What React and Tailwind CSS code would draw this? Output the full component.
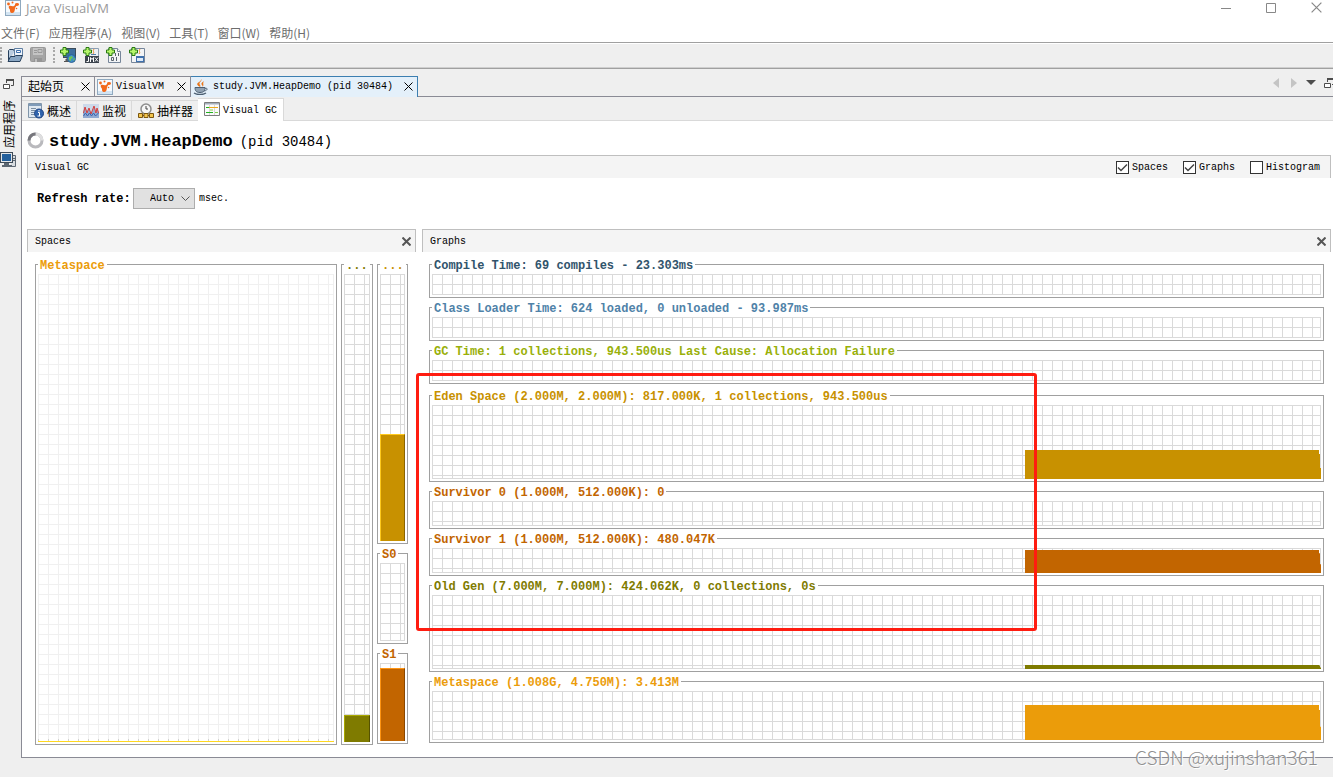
import React, { useState } from "react";

const menus = ["文件(F)", "应用程序(A)", "视图(V)", "工具(T)", "窗口(W)", "帮助(H)"];

const graphs = [
  {
    title: "Compile Time: 69 compiles - 23.303ms",
    text: "text-[#31546c]",
    height: "h-[21px]",
  },
  {
    title: "Class Loader Time: 624 loaded, 0 unloaded - 93.987ms",
    text: "text-[#4f82a8]",
    height: "h-[21px]",
  },
  {
    title: "GC Time: 1 collections, 943.500us Last Cause: Allocation Failure",
    text: "text-[#99b00a]",
    height: "h-[21px]",
    last: true,
  },
  {
    title: "Eden Space (2.000M, 2.000M): 817.000K, 1 collections, 943.500us",
    text: "text-[#c89100]",
    fill: "bg-[#c89100]",
    height: "h-[74px]",
    level: 29,
  },
  {
    title: "Survivor 0 (1.000M, 512.000K): 0",
    text: "text-[#c26500]",
    height: "h-[25px]",
  },
  {
    title: "Survivor 1 (1.000M, 512.000K): 480.047K",
    text: "text-[#c26500]",
    fill: "bg-[#c26500]",
    height: "h-[25px]",
    level: 23,
  },
  {
    title: "Old Gen (7.000M, 7.000M): 424.062K, 0 collections, 0s",
    text: "text-[#7f7b00]",
    fill: "bg-[#7f7b00]",
    height: "h-[74px]",
    level: 4,
  },
  {
    title: "Metaspace (1.008G, 4.750M): 3.413M",
    text: "text-[#eb9c0a]",
    fill: "bg-[#eb9c0a]",
    height: "h-[49px]",
    level: 35,
  },
];

/* ---------- Icons ---------- */

const VisualVmIcon = () => (
  <svg className="w-4 h-4 shrink-0" viewBox="0 0 16 16">
    <rect x="0.5" y="0.5" width="15" height="15" fill="#f6fafd" stroke="#8fa9bf" />
    <path d="M1 12h14v3H1z" fill="#d3e4f2" />
    <path d="M4 6c2-1 3 1 5 0l2-2 1 1-2 3c0 3-1 5-3 5s-2-2-2-3-2-2-1-4z" fill="#f2691b" />
    <circle cx="3.5" cy="4" r="1.4" fill="#f2691b" />
    <ellipse cx="12" cy="4.5" rx="2" ry="1.4" fill="#f2691b" />
    <circle cx="7.5" cy="2.5" r="1" fill="#f2691b" />
    <circle cx="11.5" cy="8.5" r="0.8" fill="#f2691b" />
  </svg>
);

const OpenIcon = () => (
  <svg className="w-4 h-4" viewBox="0 0 16 16">
    <path d="M1.5 14V3.5l1-1h4l1 2" fill="#b9cce0" stroke="#27405c" />
    <path d="M7.5 1.5h8v7h-8z" fill="#eef4fb" stroke="#5f7fa3" />
    <path d="M9.500 3.500h4v2h-4z" fill="#fff" stroke="#3f71ae" />
    <path d="M1 14.5L3.500 9.500H8l1-1h6.500l-2.500 6z" fill="#8aa7c4" stroke="#27405c" />
  </svg>
);

const SaveIcon = () => (
  <svg className="w-4 h-4" viewBox="0 0 16 16">
    <rect x="0.5" y="0.5" width="15" height="14" rx="1" fill="#a5a5a5" stroke="#989898" />
    <path d="M3 1h10v7H3z" fill="#c4c4c4" />
    <path d="M4 3.5h3M8 2.500h4v3H8zM4 5.5h3" fill="none" stroke="#999" />
    <path d="M4 11h8v4H4z" fill="#959595" />
    <path d="M5 12h2v3H5z" fill="#c0c0c0" />
  </svg>
);

const Plus = () => (
  <path
    d="M3 .5h3V3h2.500v3H6v2.500H3V6H.5V3H3z"
    fill="#b6f56b"
    stroke="#287a12"
  />
);

const AddHostIcon = () => (
  <svg className="w-4 h-4" viewBox="0 0 16 16">
    <rect x="3.500" y="1.500" width="12" height="9" fill="#3e6f9e" stroke="#3c4b59" />
    <path d="M4 14.500h5M6 12h3v2H6z" fill="#777" stroke="#555" />
    <circle cx="11.500" cy="11.500" r="4" fill="#3f8fc6" stroke="#2c5f93" />
    <path d="M9 10l3-1 1 2-2 1 0 2-2-1zM13 12l2-1-1 3z" fill="#6fc555" />
    <Plus />
  </svg>
);

const AddJmxIcon = () => (
  <svg className="w-4 h-4" viewBox="0 0 16 16">
    <path d="M3.500 1.500h12v14h-12z" fill="#eef2f6" stroke="#8c9eb2" />
    <path d="M11 2c-2 2 1 3-1 5" stroke="#ef8a2c" fill="none" />
    <path d="M8 7.500h5" stroke="#5480a8" />
    <path d="M2 9h14v7H2z" fill="#3c444e" />
    <path
      d="M5.500 10v4.500h-2M7.500 15v-4.500l1.500 2 1.500-2V15M12 10.500l3 4M15 10.500l-3 4"
      stroke="#fff"
      fill="none"
    />
    <Plus />
  </svg>
);

const AddDumpIcon = () => (
  <svg className="w-4 h-4" viewBox="0 0 16 16">
    <path d="M2.500 1.500h9l3 3v11h-12z" fill="#f2f4f6" stroke="#76869a" />
    <path d="M11.500 1.500v3h3" fill="#fff" stroke="#76869a" />
    <path
      d="M9.500 6v3M12.500 6v3M5.500 10.500h2v3h-2zM10.500 10v4"
      fill="none"
      stroke="#59636f"
    />
    <Plus />
  </svg>
);

const AddSnapshotIcon = () => (
  <svg className="w-4 h-4" viewBox="0 0 16 16">
    <path d="M2.500 1.500h13v14h-13z" fill="#f2f4f6" stroke="#76869a" />
    <path d="M11 2c-2 2 1 3-1 5" stroke="#ef8a2c" fill="none" />
    <rect x="7.500" y="9.500" width="7" height="5" fill="#dfeaf6" stroke="#3f71ae" />
    <path d="M8 10.500h6" stroke="#3f71ae" />
    <Plus />
  </svg>
);

const JavaIcon = () => (
  <svg className="w-4 h-4 shrink-0" viewBox="0 0 16 16">
    <path d="M8 0c2 2-3 3-1 6 1 1 0 2 0 2-3-2-4-3-1-5 2-1 2-2 2-3z" fill="#e9761a" />
    <path d="M11 2c-3 2-3 3-2 4 1 1 0 2 0 2 3-2 0-3 2-6z" fill="#e9761a" />
    <path d="M2 8.500h10c0 3-1 5-5 5s-5-2-5-5z" fill="#91a2b2" stroke="#4d6073" />
    <path d="M12 9.500c3-1 3 2-1 2.500" fill="none" stroke="#4d6073" />
    <path d="M1 14c3 2 9 2 12 0" fill="none" stroke="#4d6073" strokeWidth="1.500" />
  </svg>
);

const OverviewIcon = () => (
  <svg className="w-4 h-4 shrink-0" viewBox="0 0 16 16">
    <path d="M.5.5h13v14H.5z" fill="#dfe8f1" stroke="#8095aa" />
    <path d="M1 1h12v2H1z" fill="#7f9bb9" />
    <path d="M3 5.500h5M3 7.500h4M3 9.500h3M3 11.500h3" stroke="#7b8ea2" />
    <circle cx="11" cy="10.500" r="4.500" fill="#2f63ad" stroke="#1d4382" />
    <path d="M11 7v1.500M10 9.500h1.500v3.500M9.500 13h3" stroke="#fff" fill="none" />
  </svg>
);

const MonitorIcon = () => (
  <svg className="w-4 h-4 shrink-0" viewBox="0 0 16 16">
    <path d="M0 1h16v14H0z" fill="#cddaea" />
    <path d="M0 15V9l2-5 2 4 2-3 2 5 3-6 2 5 1-4 2 4v6z" fill="#8fa9d2" />
    <path
      d="M.5 10L2 4l2 6 2-5 2 6 3-8 2 7 1-5 1.500 5"
      fill="none"
      stroke="#d8403c"
    />
    <path d="M.5 13l2-3 2 3 2-3 2 3 2-3 2 3 3-3" fill="none" stroke="#3a62ad" />
  </svg>
);

const SamplerIcon = () => (
  <svg className="w-4 h-4 shrink-0" viewBox="0 0 16 16">
    <circle cx="8" cy="6" r="5" fill="#f6f6f6" stroke="#8d8d8d" strokeWidth="1.500" />
    <path d="M8 3v3h2" fill="none" stroke="#444" />
    <path d="M1 12.500h14" stroke="#7a5610" />
    <path
      d="M.5 10.500h4v4h-4zM6 10.500h4v4H6zM11.500 10.500h4v4h-4z"
      fill="#f4c64e"
      stroke="#7a5610"
    />
  </svg>
);

const VisualGcIcon = () => (
  <svg className="w-4 h-4 shrink-0" viewBox="0 0 16 16">
    <path d="M.5 1.500h15v13H.5z" fill="#fbfbfb" stroke="#7d7d7d" />
    <path d="M1 2h14v1.500H1z" fill="#a4aebb" />
    <path d="M5.500 4v10M10.500 4v10" stroke="#d8d8d8" />
    <path d="M2 6.500h12" stroke="#eba91c" />
    <path d="M2 6.500h3M2 11.500h7" stroke="#1eb31e" />
    <path d="M11 11.500h3M6 9h3" stroke="#7fce4d" />
  </svg>
);

const ComputerIcon = () => (
  <svg className="w-4 h-4" viewBox="0 0 16 16">
    <path d="M12.500 3.500h3v11h-5" fill="#d8dce0" stroke="#5c6772" />
    <path d="M12 6.500h3M12 8.500h3" stroke="#5c6772" />
    <rect x="0.500" y="0.500" width="12" height="10" fill="#e3e6e9" stroke="#3d4a57" />
    <rect x="2" y="2" width="9" height="7" fill="#225f9c" />
    <path d="M4 11h5v2H4zM2 13h10v2H2z" fill="#5c6772" />
  </svg>
);

const RestoreIcon = () => (
  <svg className="w-[11px] h-[11px]" viewBox="0 0 11 11" fill="none" stroke="#4d4d4d">
    <path d="M3.500 4V1.500h7v5H8" />
    <path d="M3 1h8" strokeWidth="2" />
    <path d="M.5 5.500h6v4h-6z" fill="#fff" />
  </svg>
);

const Cross = ({ className }) => (
  <svg className={className} viewBox="0 0 9 9" fill="none" stroke="currentColor">
    <path d="M.5.5l8 8M8.500.5l-8 8" />
  </svg>
);

/* ---------- Building blocks ---------- */

const Grid = ({ height, light, children }) => (
  <div
    className={`relative w-full border-r border-b bg-[size:10px_10px] ${height} ${
      light
        ? "border-[#f0f0f0] bg-[linear-gradient(to_right,#f0f0f0_1px,transparent_1px),linear-gradient(to_bottom,#f0f0f0_1px,transparent_1px)]"
        : "border-[#dadada] bg-[linear-gradient(to_right,#dadada_1px,transparent_1px),linear-gradient(to_bottom,#dadada_1px,transparent_1px)]"
    }`}
  >
    {children}
  </div>
);

const Frame = ({ title, text, className = "", children }) => (
  <fieldset className={`min-w-0 border border-[#a0a0a0] p-[2px] ${className}`}>
    <legend
      className={`px-[2px] h-[15px] leading-[18px] text-xs font-bold whitespace-nowrap ${text}`}
    >
      {title}
    </legend>
    {children}
  </fieldset>
);

const Bar = ({ level, className }) => (
  <div
    className={`absolute left-0 -right-px -bottom-px border-t border-l border-r ${className}`}
    style={{ height: level }}
  />
);

const PanelHeader = ({ title, children }) => (
  <div className="flex items-center justify-between h-[23px] pl-[7px] border-t border-x border-[#bfbfbf] bg-[#f4f4f4]">
    <h2>{title}</h2>
    {children}
  </div>
);

const CheckBox = ({ label, initial }) => {
  const [checked, setChecked] = useState(initial);

  return (
    <label className="flex items-center gap-[3px]">
      <span className="relative w-[13px] h-[13px]">
        <input
          type="checkbox"
          checked={checked}
          onChange={(e) => setChecked(e.target.checked)}
          className="block appearance-none w-[13px] h-[13px] border border-[#333] bg-white"
        />
        {checked && (
          <svg
            className="absolute inset-0 pointer-events-none"
            viewBox="0 0 13 13"
            fill="none"
            stroke="#444"
            strokeWidth="1.500"
          >
            <path d="M2 6.500l3 3L11 3.500" />
          </svg>
        )}
      </span>
      {label}
    </label>
  );
};

const App = () => {
  const [rate, setRate] = useState("Auto");

  return (
    <div className="relative min-h-screen overflow-hidden bg-[#efefef] text-black text-[10px] font-['Liberation_Mono','Noto_Sans_CJK_SC',monospace]">
      {/* Title Bar */}
      <header className="bg-white border-b border-[#a0a0a0]">
        <div className="flex items-center justify-between h-[15px] pl-[5px] pr-[11px]">
          <div className="flex items-center gap-[5px] text-[13px] leading-4 text-[#999] font-['Open_Sans',sans-serif]">
            <VisualVmIcon />
            <h1>Java VisualVM</h1>
          </div>
          <div className="flex items-center gap-[35px] text-[#888]">
            <button aria-label="Minimize">
              <svg className="w-[10px] h-[10px]" viewBox="0 0 10 10" stroke="currentColor">
                <path d="M0 5.500h10" />
              </svg>
            </button>
            <button aria-label="Maximize">
              <svg className="w-[10px] h-[10px]" viewBox="0 0 10 10" fill="none" stroke="currentColor">
                <path d="M.5.5h9v9h-9z" />
              </svg>
            </button>
            <button aria-label="Close">
              <Cross className="w-[11px] h-[11px]" />
            </button>
          </div>
        </div>

        {/* Menu */}
        <nav className="flex items-center gap-[9px] h-[18px] mt-[9px] pl-px text-xs text-[#6d6d6d] font-['Noto_Sans_CJK_SC',sans-serif]">
          {menus.map((menu) => (
            <button key={menu} className="leading-[18px]">
              {menu}
            </button>
          ))}
        </nav>
      </header>

      {/* Toolbar */}
      <div className="border-t border-white">
        <div className="flex items-center h-6 pb-px border-b border-[#cfcfcf]">
          <span className="w-[2px] h-4 mr-[5px] border-l-2 border-dotted border-[#a8a8a8]" />
          <div className="flex gap-[7px]">
            <button aria-label="Open"><OpenIcon /></button>
            <button aria-label="Save"><SaveIcon /></button>
          </div>
          <span className="w-[2px] h-4 ml-[7px] mr-[5px] border-l-2 border-dotted border-[#a8a8a8]" />
          <div className="flex gap-[7px]">
            <button aria-label="Add host"><AddHostIcon /></button>
            <button aria-label="Add JMX connection"><AddJmxIcon /></button>
            <button aria-label="Add core dump"><AddDumpIcon /></button>
            <button aria-label="Add snapshot"><AddSnapshotIcon /></button>
          </div>
        </div>
        <div className="h-px bg-[#a0a0a0]" />
      </div>

      <div className="flex">
        {/* Side Bar */}
        <aside className="flex flex-col items-start w-[21px] shrink-0 pt-[10px]">
          <button aria-label="Restore" className="ml-[3px]"><RestoreIcon /></button>
          <button className="mt-[10px] ml-[3px] text-xs leading-4 [writing-mode:vertical-rl] [text-orientation:sideways] rotate-180">
            应用程序
          </button>
          <button aria-label="Applications" className="mt-1"><ComputerIcon /></button>
        </aside>

        <main className="relative flex-1 min-w-0 mt-[7px] border-l border-b border-[#8a8b95] bg-white">
          {/* Document Tabs */}
          <div className="flex justify-between h-[21px] border-b border-[#8a8b95] bg-[#efefef]">
            <div className="flex h-[21px]">
              <div className="flex items-center w-[73px] h-5 pl-[6px] pr-1 border-t border-r border-[#8a8b95] bg-[#f2f2f2]">
                <a href="#start" className="flex-1 pt-[2px] text-xs leading-4">起始页</a>
                <button aria-label="Close tab"><Cross className="w-[9px] h-[9px]" /></button>
              </div>
              <div className="flex items-center w-24 h-5 pl-[2px] pr-1 border-t border-r border-[#8a8b95] bg-[#f2f2f2]">
                <VisualVmIcon />
                <a href="#visualvm" className="flex-1 pl-[3px]">VisualVM</a>
                <button aria-label="Close tab"><Cross className="w-[9px] h-[9px]" /></button>
              </div>
              <div className="flex items-center w-[227px] h-[21px] pl-[2px] pr-1 pb-px border-t border-r border-[#3c7fb1] bg-[#e4f0fa]">
                <JavaIcon />
                <a href="#heapdemo" className="flex-1 pl-1">study.JVM.HeapDemo (pid 30484)</a>
                <button aria-label="Close tab"><Cross className="w-[9px] h-[9px]" /></button>
              </div>
            </div>
            <div className="flex items-center h-[14px]">
              <button aria-label="Previous" className="mr-3">
                <svg className="w-[6px] h-[10px]" viewBox="0 0 6 10" fill="#c4c4c4"><path d="M6 0v10L0 5z" /></svg>
              </button>
              <button aria-label="Next" className="mr-[9px]">
                <svg className="w-[6px] h-[10px]" viewBox="0 0 6 10" fill="#c4c4c4"><path d="M0 0v10l6-5z" /></svg>
              </button>
              <button aria-label="Tab list" className="mr-2">
                <svg className="w-[10px] h-[6px]" viewBox="0 0 10 6" fill="#4d4d4d"><path d="M0 0h10L5 5z" /></svg>
              </button>
              <button aria-label="Restore window" className="w-[9px] overflow-hidden"><RestoreIcon /></button>
            </div>
          </div>

          {/* Sub Tabs */}
          <div className="flex h-6 border-b border-[#d9d9d9] bg-[#efefef] text-xs">
            <a href="#overview" className="flex items-center gap-[3px] w-[55px] mt-[3px] pl-[6px] border-t border-r border-[#d9d9d9]">
              <OverviewIcon />
              <span className="pt-1">概述</span>
            </a>
            <a href="#monitor" className="flex items-center gap-[3px] w-[55px] mt-[3px] pl-[6px] border-t border-r border-[#d9d9d9]">
              <MonitorIcon />
              <span className="pt-1">监视</span>
            </a>
            <a href="#sampler" className="flex items-center gap-[3px] w-[66px] mt-[3px] pl-[6px] border-t border-[#d9d9d9]">
              <SamplerIcon />
              <span className="pt-1">抽样器</span>
            </a>
            <a href="#visualgc" className="flex items-center gap-[3px] w-[86px] h-[23px] mt-px pl-[6px] pb-[2px] border-t border-r border-[#d9d9d9] bg-white text-[10px]">
              <VisualGcIcon />
              <span className="pt-1">Visual GC</span>
            </a>
          </div>

          <div className="pl-[5px] pr-[2px] pb-3">
            {/* Application Title */}
            <div className="flex items-center gap-[5px] h-[34px] pt-2">
              <svg className="w-[17px] h-[17px] mb-1" viewBox="0 0 17 17" fill="none" strokeWidth="3">
                <circle cx="8.500" cy="8.500" r="6.500" stroke="#b9b9bd" />
                <path d="M8.500 2a6.500 6.500 0 0 1 6.500 6.500" stroke="#dededf" />
                <path d="M2 8.500a6.500 6.500 0 0 1 6.500-6.500" stroke="#77777d" />
              </svg>
              <h2 className="text-[17px] font-bold">study.JVM.HeapDemo</h2>
              <span className="pl-[2px] text-sm">(pid 30484)</span>
            </div>

            <PanelHeader title="Visual GC">
              <div className="flex gap-[15px] pr-[10px]">
                <CheckBox label="Spaces" initial={true} />
                <CheckBox label="Graphs" initial={true} />
                <CheckBox label="Histogram" initial={false} />
              </div>
            </PanelHeader>

            {/* Refresh Rate */}
            <div className="flex items-center h-[41px] pl-[10px]">
              <label htmlFor="rate" className="w-24 text-xs font-bold">Refresh rate:</label>
              <div className="relative">
                <select
                  id="rate"
                  value={rate}
                  onChange={(e) => setRate(e.target.value)}
                  className="block appearance-none w-[62px] h-[21px] pl-4 border border-[#adadad] bg-[#e1e1e1]"
                >
                  <option>Auto</option>
                  <option>100</option>
                  <option>500</option>
                  <option>1000</option>
                </select>
                <svg
                  className="absolute right-[5px] top-2 w-[9px] h-[6px] pointer-events-none"
                  viewBox="0 0 9 6"
                  fill="none"
                  stroke="#555"
                >
                  <path d="M.5.5l4 4 4-4" />
                </svg>
              </div>
              <span className="pl-1">msec.</span>
            </div>

            <div className="flex gap-[6px] mt-[10px]">
              {/* Spaces */}
              <section className="flex flex-col w-[389px] shrink-0">
                <PanelHeader title="Spaces">
                  <button aria-label="Close spaces" className="pr-1 text-[#555]">
                    <Cross className="w-[9px] h-[9px] stroke-2" />
                  </button>
                </PanelHeader>
                <div className="flex flex-1 gap-1 pt-[5px] px-2">
                  <Frame title="Metaspace" text="text-[#eb9c0a]" className="flex-1">
                    <Grid light height="h-full">
                      <div className="absolute left-0 -right-px -bottom-px h-[3px] border-b border-[#ffd820] bg-[size:10px_10px] bg-[linear-gradient(to_right,#d0d0d0_1px,transparent_1px)]" />
                    </Grid>
                  </Frame>
                  <Frame title="..." text="text-[#7f7b00]" className="w-8">
                    <Grid height="h-full">
                      <Bar level={27} className="bg-[#7f7b00] border-t-[#aaa800] border-l-[#aaa800] border-r-[#555200]" />
                    </Grid>
                  </Frame>
                  <div className="flex flex-col gap-[2px] w-[31px] pb-px">
                    <Frame title="..." text="text-[#c89100]" className="flex-1">
                      <Grid height="h-full">
                        <Bar level={107} className="bg-[#c89100] border-t-[#ffc91c] border-l-[#ffc91c] border-r-[#8a6400]" />
                      </Grid>
                    </Frame>
                    <Frame title="S0" text="text-[#c26500]">
                      <Grid height="h-[78px]" />
                    </Frame>
                    <Frame title="S1" text="text-[#c26500]">
                      <Grid height="h-[78px]">
                        <Bar level={73} className="bg-[#c26500] border-t-[#ff9412] border-l-[#ff9412] border-r-[#8a4700]" />
                      </Grid>
                    </Frame>
                  </div>
                </div>
              </section>

              {/* Graphs */}
              <section className="relative flex-1 min-w-0 pb-[2px]">
                <PanelHeader title="Graphs">
                  <button aria-label="Close graphs" className="pr-1 text-[#555]">
                    <Cross className="w-[9px] h-[9px] stroke-2" />
                  </button>
                </PanelHeader>
                <div className="flex flex-col gap-[2px] pt-[5px] px-[7px]">
                  {graphs.map((graph) => (
                    <Frame
                      key={graph.title}
                      title={graph.title}
                      text={graph.text}
                      className={graph.last ? "mb-[2px]" : ""}
                    >
                      <Grid height={graph.height}>
                        {graph.level && (
                          <div
                            className={`absolute -right-px -bottom-px w-[296px] [clip-path:polygon(0_0,calc(100%-2px)_0,calc(100%-2px)_14%,calc(100%-1px)_14%,calc(100%-1px)_62%,100%_62%,100%_100%,0_100%)] ${graph.fill}`}
                            style={{ height: graph.level }}
                          />
                        )}
                      </Grid>
                    </Frame>
                  ))}
                </div>

                {/* Highlighted heap area */}
                <div className="absolute -left-[6px] top-[144px] w-[621px] h-[258px] border-3 border-[#ff1c10] rounded-[3px] pointer-events-none" />
              </section>
            </div>
          </div>
        </main>
      </div>

      <span className="absolute right-[15px] bottom-2 text-[19px] leading-6 text-[#8f8f8f] [text-shadow:1px_1px_0_#fff] font-['Noto_Sans_CJK_SC',sans-serif] font-light">
        CSDN @xujinshan361
      </span>
    </div>
  );
};

export default App;
